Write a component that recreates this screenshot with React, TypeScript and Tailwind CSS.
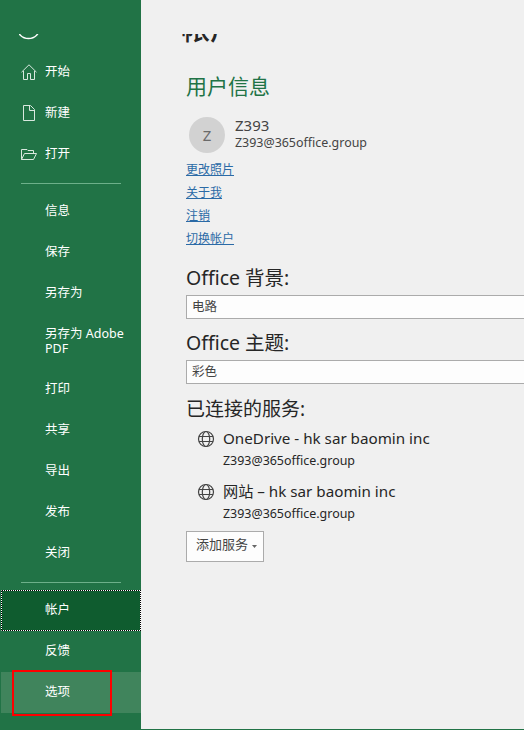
import { ReactNode } from 'react';

const mainItems = ['信息', '保存', '另存为', '另存为 Adobe PDF', '打印', '共享', '导出', '发布', '关闭'];
const links = ['更改照片', '关于我', '注销', '切换帐户'];
const services = [
    { name: 'OneDrive - hk sar baomin inc', email: 'Z393@365office.group' },
    { name: '网站 – hk sar baomin inc', email: 'Z393@365office.group' },
];

function HomeIcon() {
    return (
        <svg width="16" height="16" viewBox="0 0 16 16" fill="none" stroke="#d9e8df">
            <path d="M.5 8.200 8 .8l7.500 7.400M2.500 7v8.500h4v-6h3v6h4V7" />
        </svg>
    );
}

function FileIcon() {
    return (
        <svg width="16" height="16" viewBox="0 0 16 16" fill="none" stroke="#d9e8df">
            <path d="M2.500.5h7l4 4v11h-11zM8.500.5v5h5" />
        </svg>
    );
}

function FolderIcon() {
    return (
        <svg width="16" height="16" viewBox="0 0 16 16" fill="none" stroke="#d9e8df">
            <path d="M.5 13.500v-10h5.500l1 1h5.500v3M.5 13.500l3-6h12l-3 6z" />
        </svg>
    );
}

function GlobeIcon() {
    return (
        <svg width="18" height="18" viewBox="0 0 18 18" fill="none" stroke="#444444" strokeWidth="1.200">
            <circle cx="9" cy="9" r="7.500" />
            <ellipse cx="9" cy="9" rx="3.700" ry="7.500" />
            <path d="M2 6.500h14M2 11.500h14" />
        </svg>
    );
}

function Divider() {
    return (
        <div className="h-4 shrink-0 pt-2 pl-[21px]">
            <div className="h-px w-[100px] bg-[#6db08a]" />
        </div>
    );
}

function TopItem({ icon, label }: { icon: ReactNode; label: string }) {
    return (
        <div className="flex h-[41px] shrink-0 items-center pb-px pl-[21px]">
            {icon}
            <span className="mb-[2px] ml-2">{label}</span>
        </div>
    );
}

function Select({ value }: { value: string }) {
    return (
        <div className="h-6 border border-r-0 border-[#ababab] bg-[#fdfdfd] pl-[5px] text-[12.5px] leading-[21px] text-[#444444]">
            {value}
        </div>
    );
}

function App() {
    return (
        <div className="flex h-[730px] w-[524px] overflow-hidden bg-[#f0f0f0] font-['Noto_Sans','Noto_Sans_CJK_SC',sans-serif]">
            <nav className="flex w-[141px] shrink-0 flex-col bg-[#217346] text-[12.5px] leading-[15px] text-white">
                <div className="h-[52px] shrink-0 pt-[34px] pl-[19px]">
                    <svg width="20" height="6" viewBox="0 0 20 6" fill="none" stroke="#ffffff" strokeWidth="1.400">
                        <circle cx="9.500" cy="-7" r="11.500" />
                    </svg>
                </div>
                <TopItem icon={<HomeIcon />} label="开始" />
                <TopItem icon={<FileIcon />} label="新建" />
                <TopItem icon={<FolderIcon />} label="打开" />
                <Divider />
                {mainItems.map((item) => (
                    <div
                        key={item}
                        className={`flex shrink-0 items-center pr-3 pb-[2px] pl-[45px] ${item.includes('Adobe') ? 'h-[55px]' : 'h-[41px]'}`}
                    >
                        {item}
                    </div>
                ))}
                <Divider />
                <div className="relative ml-px flex h-[41px] shrink-0 items-center bg-[#0f5c2f] pb-[2px] pl-11">
                    帐户
                    <svg className="absolute inset-0" width="140" height="41" fill="none">
                        <rect x=".5" y=".5" width="139" height="40" stroke="#000000" />
                        <rect x=".5" y=".5" width="139" height="40" stroke="#ffffff" strokeDasharray="1 1" strokeDashoffset=".5" />
                    </svg>
                </div>
                <div className="flex h-[41px] shrink-0 items-center pb-[2px] pl-[45px]">反馈</div>
                <div className="relative ml-px flex h-[41px] shrink-0 items-center bg-[#40845c] pb-[2px] pl-11">
                    选项
                    <div className="absolute top-[-2px] left-[11px] h-[46px] w-[100px] border-2 border-[#fe0000]" />
                </div>
            </nav>

            <main className="flex min-w-0 flex-1 flex-col border-b border-[#217346] pl-[45px] text-[#262626]">
                {/* page title, scrolled partly under the top edge */}
                <div className="mt-[34px] -ml-[5px] flex h-3 items-end overflow-hidden text-[29px] font-medium">
                    <span className="shrink-0 leading-[34px]">帐户</span>
                </div>
                <h1 className="mt-[25px] text-[21px] leading-[30px] text-[#217346]">用户信息</h1>

                <div className="mt-[16px] flex pl-[3px]">
                    <div className="flex size-9 items-center justify-center rounded-full bg-[#d2d2d2] text-[15px] text-[#6a6a6a]">Z</div>
                    <div className="ml-[10px] text-[#444444]">
                        <div className="text-[15px] leading-[17px]">Z393</div>
                        <div className="text-[12.450px] leading-[17px]">Z393@365office.group</div>
                    </div>
                </div>

                <div className="mt-[5px] flex flex-col items-start text-[12px] leading-[23px] text-[#2b6aa6]">
                    {links.map((link) => (
                        <a key={link} className="underline underline-offset-1">{link}</a>
                    ))}
                </div>

                <h2 className="mt-[13px] text-[19.5px] leading-[30px]">Office 背景:</h2>
                <div className="mt-[2px]"><Select value="电路" /></div>
                <h2 className="mt-[9px] text-[19.5px] leading-[30px]">Office 主题:</h2>
                <div className="mt-[2px]"><Select value="彩色" /></div>
                <h2 className="mt-[10px] text-[19px] leading-[30px]">已连接的服务:</h2>

                {services.map((service) => (
                    <div key={service.name} className="flex h-[53px] shrink-0 pt-[2px] pl-[11px]">
                        <div className="pt-1"><GlobeIcon /></div>
                        <div className="ml-2">
                            <div className="text-[15.2px] leading-6">{service.name}</div>
                            <div className="text-[12.450px] leading-[22px]">{service.email}</div>
                        </div>
                    </div>
                ))}

                <button className="mt-px flex h-[31px] w-[78px] shrink-0 items-center border border-[#ababab] bg-[#fdfdfd] pl-[9px] text-[13px] text-[#444444]">
                    <span className="mb-[3px]">添加服务</span>
                    <svg className="ml-1" width="5" height="3" viewBox="0 0 5 3" fill="#666666">
                        <path d="M0 0h5L2.500 3z" />
                    </svg>
                </button>
            </main>
        </div>
    );
}

export default App;
